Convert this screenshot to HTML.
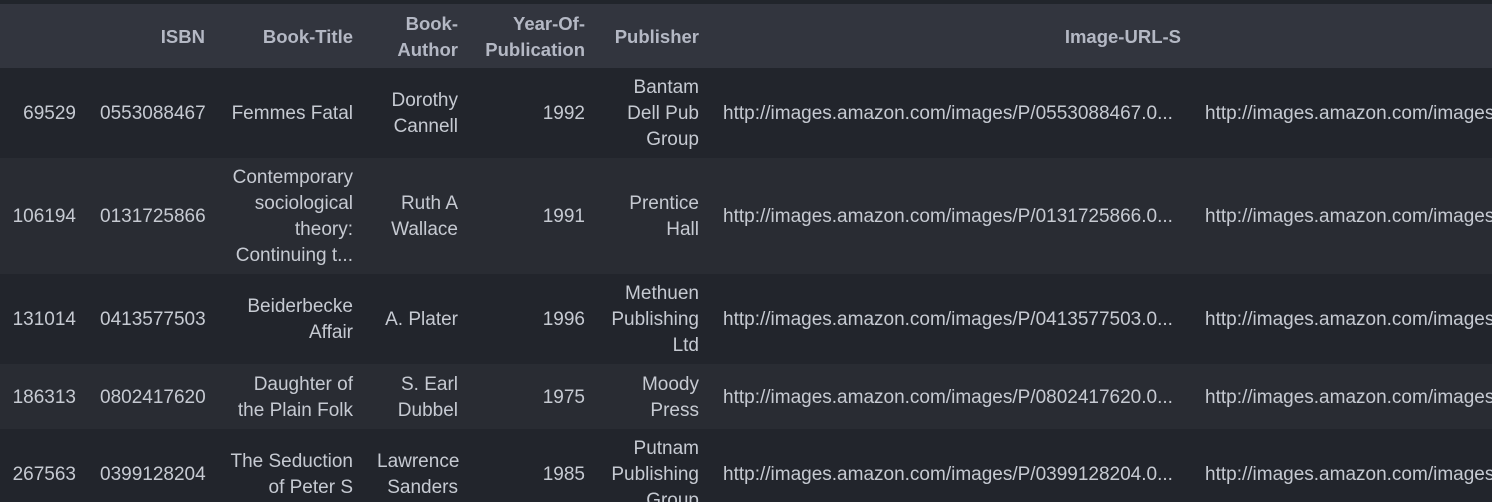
<!DOCTYPE html>
<html><head><meta charset="utf-8"><style>
html,body{margin:0;padding:0;background:#22252c;width:1492px;height:502px;overflow:hidden}
.wrap{width:1492px;height:502px;overflow:hidden;position:relative}
.top{height:4px;background:#21252b}
table{border-collapse:collapse;table-layout:fixed;width:1593px;font-family:"Liberation Sans",sans-serif;font-size:19px;line-height:26px;color:#c6cad2;white-space:nowrap}
td,th{padding:2px 12px 0 12px;text-align:right;vertical-align:middle;overflow:hidden;box-sizing:border-box}
th{background:#32353e;color:#b4b8c4;font-weight:bold;height:64px;font-size:18.5px}
tr.a td{background:#22252c}
tr.b td{background:#292c33}
td.u{text-align:left;text-overflow:clip}
</style></head><body><div class="wrap">
<div class="top"></div>
<table>
<colgroup><col style="width:88px"><col style="width:129px"><col style="width:148px"><col style="width:105px"><col style="width:127px"><col style="width:114px"><col style="width:482px"><col style="width:400px"></colgroup>
<tr><th></th><th>ISBN</th><th>Book-Title</th><th>Book-<br>Author</th><th>Year-Of-<br>Publication</th><th>Publisher</th><th>Image-URL-S</th><th></th></tr>
<tr class="a" style="height:90px"><td>69529</td><td>0553088467</td><td>Femmes Fatal</td><td>Dorothy<br>Cannell</td><td>1992</td><td>Bantam<br>Dell Pub<br>Group</td><td class="u">http://images.amazon.com/images/P/0553088467.0...</td><td class="u">http://images.amazon.com/images/P/0553088467</td></tr>
<tr class="b" style="height:116px"><td>106194</td><td>0131725866</td><td>Contemporary<br>sociological<br>theory:<br>Continuing t...</td><td>Ruth A<br>Wallace</td><td>1991</td><td>Prentice<br>Hall</td><td class="u">http://images.amazon.com/images/P/0131725866.0...</td><td class="u">http://images.amazon.com/images/P/0131725866</td></tr>
<tr class="a" style="height:90px"><td>131014</td><td>0413577503</td><td>Beiderbecke<br>Affair</td><td>A. Plater</td><td>1996</td><td>Methuen<br>Publishing<br>Ltd</td><td class="u">http://images.amazon.com/images/P/0413577503.0...</td><td class="u">http://images.amazon.com/images/P/0413577503</td></tr>
<tr class="b" style="height:65px"><td>186313</td><td>0802417620</td><td>Daughter of<br>the Plain Folk</td><td>S. Earl<br>Dubbel</td><td>1975</td><td>Moody<br>Press</td><td class="u">http://images.amazon.com/images/P/0802417620.0...</td><td class="u">http://images.amazon.com/images/P/0802417620</td></tr>
<tr class="a" style="height:90px"><td>267563</td><td>0399128204</td><td>The Seduction<br>of Peter S</td><td>Lawrence<br>Sanders</td><td>1985</td><td>Putnam<br>Publishing<br>Group</td><td class="u">http://images.amazon.com/images/P/0399128204.0...</td><td class="u">http://images.amazon.com/images/P/0399128204</td></tr>
</table>
</div></body></html>
